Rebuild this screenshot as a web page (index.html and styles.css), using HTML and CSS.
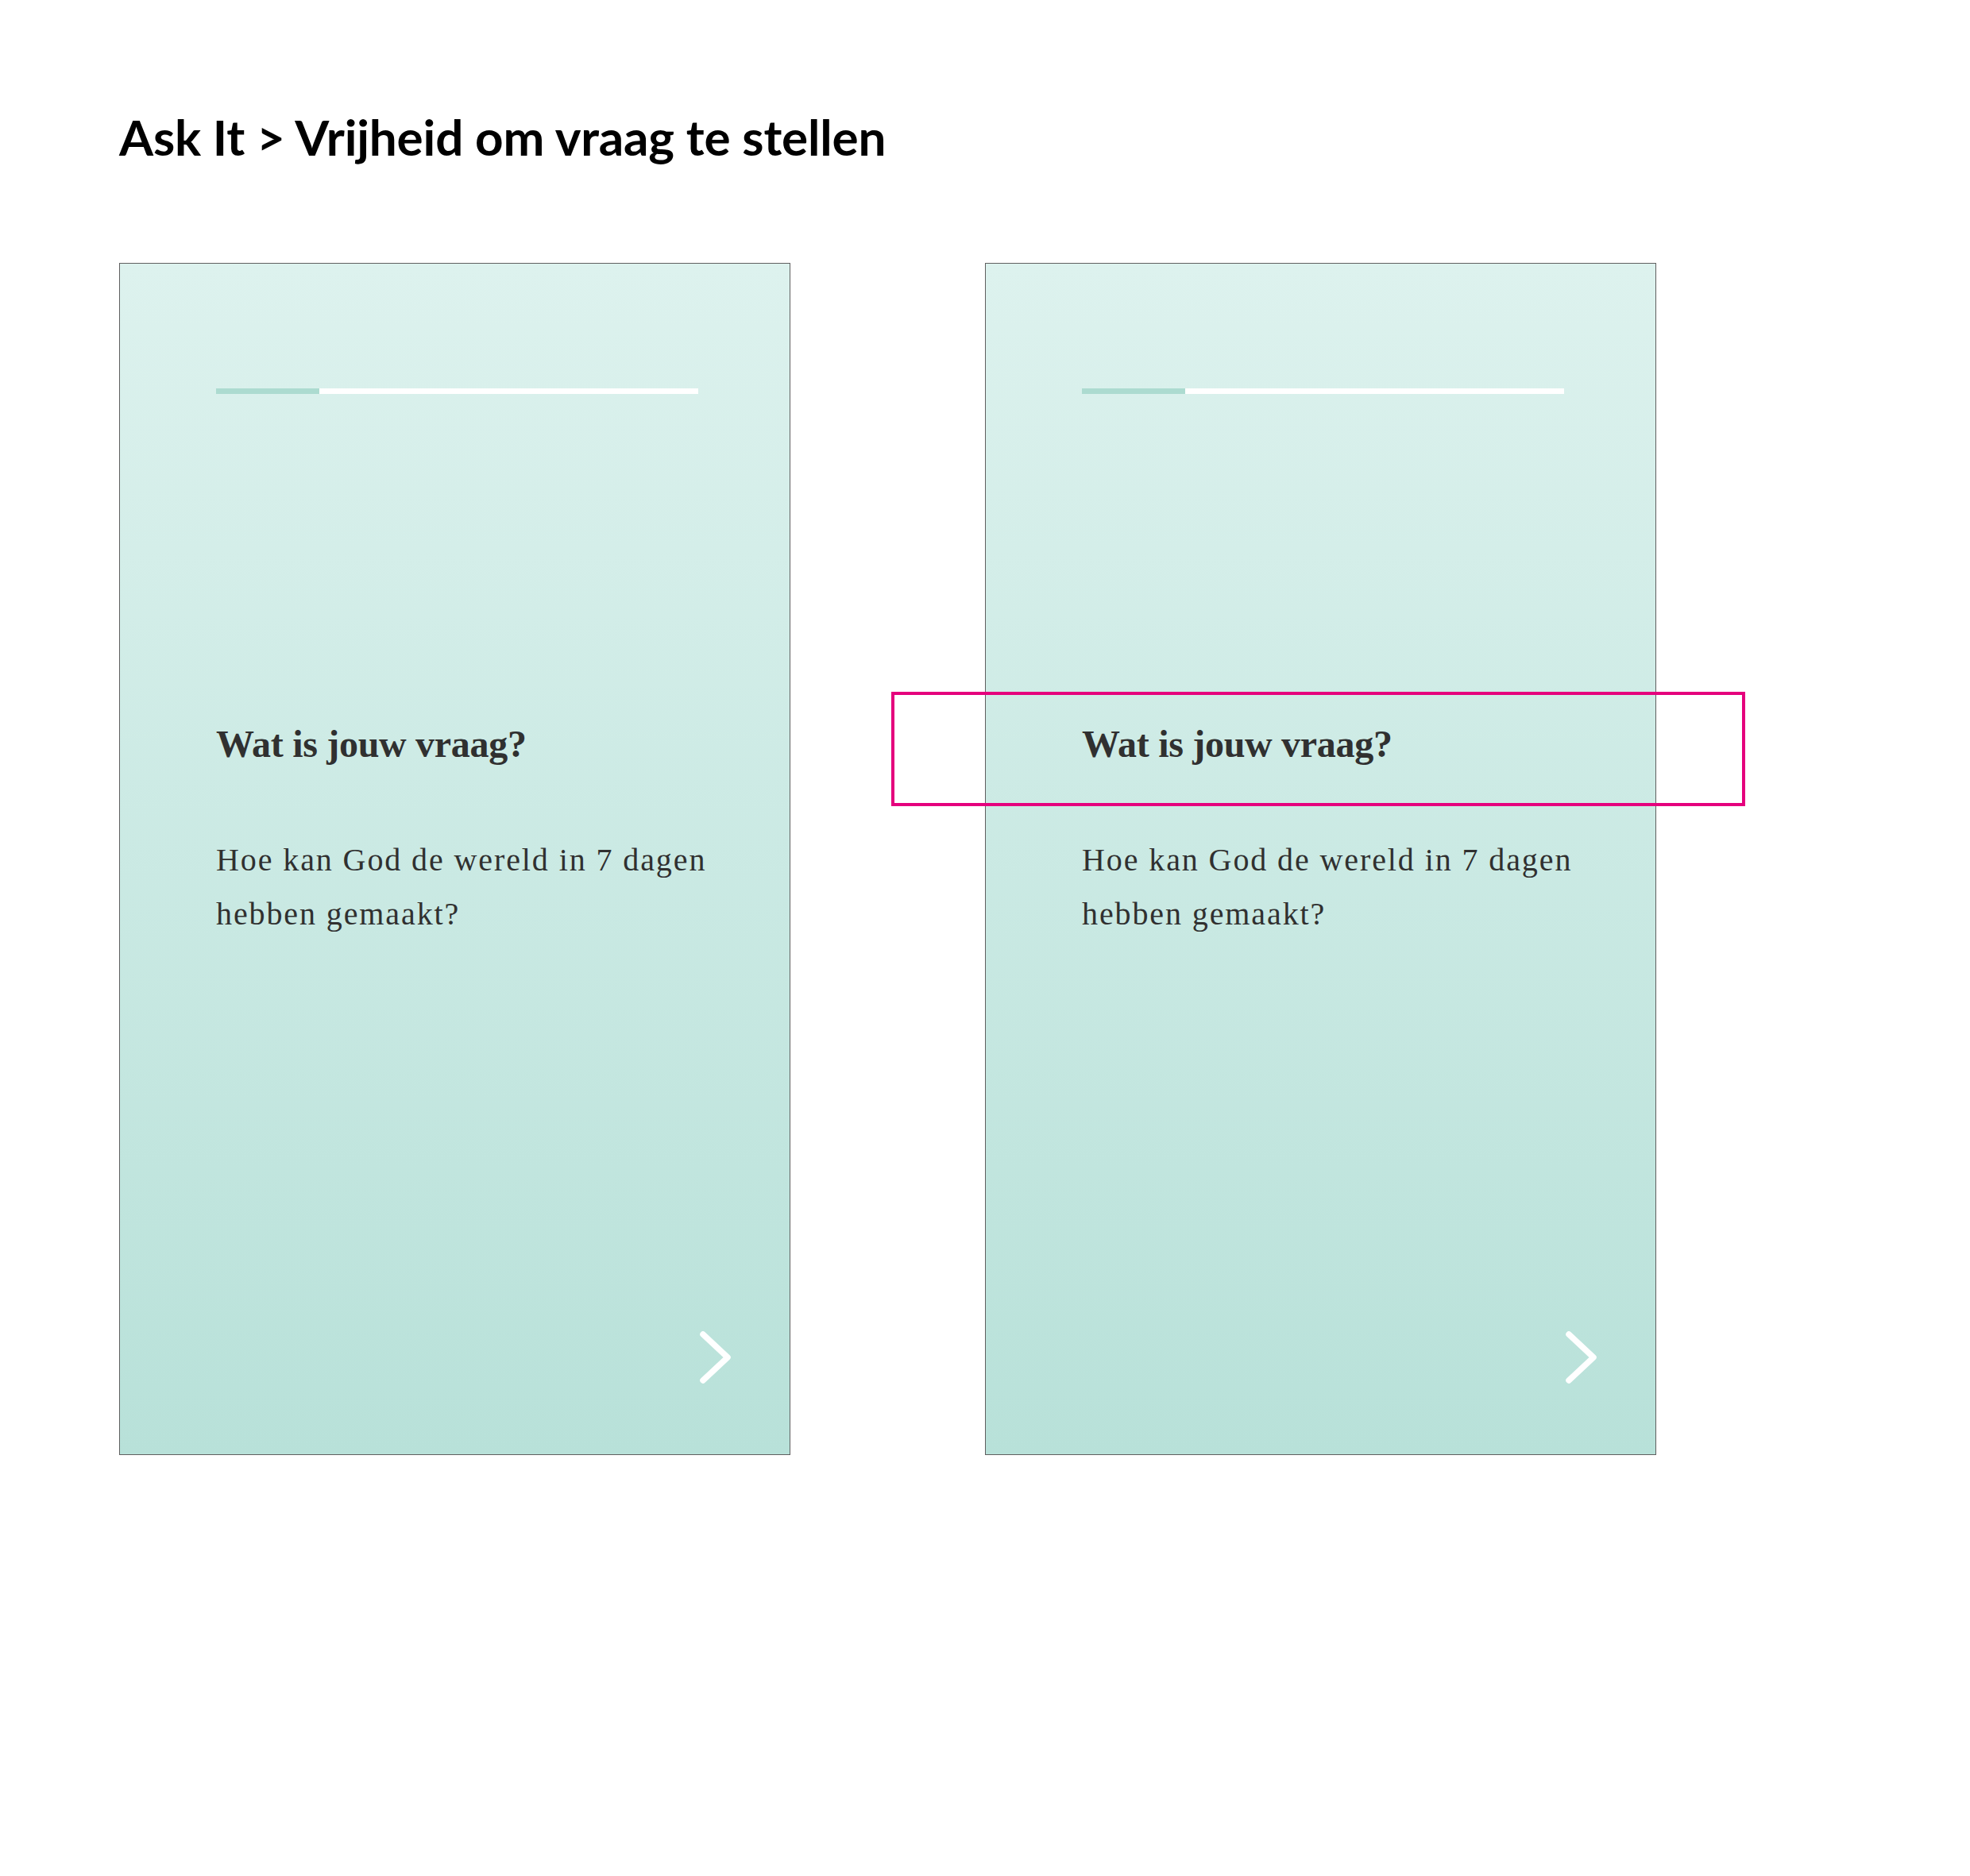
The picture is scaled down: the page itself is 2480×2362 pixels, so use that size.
FILE: index.html
```html
<!DOCTYPE html>
<html lang="nl">
<head>
<meta charset="utf-8">
<title>Ask It &gt; Vrijheid om vraag te stellen</title>
<link rel="stylesheet" href="styles.css">
</head>
<body>
<main class="page">
  <h1 class="title">Ask It &gt; Vrijheid om vraag te stellen</h1>
  <div class="screens">
    <section class="screen">
      <div class="progress"><div class="progress-fill"></div></div>
      <h2 class="question">Wat is jouw vraag?</h2>
      <p class="answer">Hoe kan God de wereld in 7 dagen hebben gemaakt?</p>
      <svg class="next" width="48" height="76" viewBox="0 0 48 76" aria-hidden="true">
        <polyline points="8,9 39,38 8,67" fill="none" stroke="#ffffff" stroke-width="7.5" stroke-linecap="round" stroke-linejoin="round"/>
      </svg>
    </section>
    <section class="screen screen-annotated">
      <div class="progress"><div class="progress-fill"></div></div>
      <h2 class="question">Wat is jouw vraag?</h2>
      <p class="answer">Hoe kan God de wereld in 7 dagen hebben gemaakt?</p>
      <svg class="next" width="48" height="76" viewBox="0 0 48 76" aria-hidden="true">
        <polyline points="8,9 39,38 8,67" fill="none" stroke="#ffffff" stroke-width="7.5" stroke-linecap="round" stroke-linejoin="round"/>
      </svg>
      <div class="highlight"></div>
    </section>
  </div>
</main>
</body>
</html>
```

FILE: styles.css
```css
html, body {
  margin: 0;
  padding: 0;
  background: #ffffff;
}

.page {
  padding: 141px 0 0 150px;
  width: 2480px;
  height: 2362px;
  box-sizing: border-box;
}

.title {
  margin: 0;
  font-family: Lato, "Open Sans", sans-serif;
  font-weight: 700;
  font-size: 62px;
  line-height: 1;
  letter-spacing: -0.17px;
  color: #000000;
}

.screens {
  display: flex;
  gap: 245px;
  margin-top: 128px;
}

.screen {
  position: relative;
  box-sizing: border-box;
  width: 845px;
  height: 1501px;
  border: 1px solid #5f5f5f;
  background: linear-gradient(to bottom, #ddf2ee 0%, #b8e1d9 100%);
  display: flex;
  flex-direction: column;
  padding: 157px 0 84px 121px;
}

.progress {
  width: 607px;
  height: 7px;
  background: #ffffff;
  display: flex;
}

.progress-fill {
  width: 130px;
  height: 100%;
  background: #acdbd0;
}

.question {
  margin: 417px 0 0 0;
  font-family: "Liberation Serif", serif;
  font-weight: 700;
  font-size: 48px;
  line-height: 1;
  color: #303030;
  letter-spacing: -0.3px;
}

.answer {
  margin: 88px 0 0 0;
  width: 640px;
  font-family: "Liberation Serif", serif;
  font-weight: 400;
  font-size: 40px;
  line-height: 68px;
  letter-spacing: 1.9px;
  color: #303030;
}

.next {
  display: block;
  margin-top: auto;
  align-self: flex-end;
  margin-right: 69px;
}

.highlight {
  position: absolute;
  left: -119px;
  top: 539px;
  width: 1075px;
  height: 144px;
  box-sizing: border-box;
  border: 4px solid #e5007d;
}
```
